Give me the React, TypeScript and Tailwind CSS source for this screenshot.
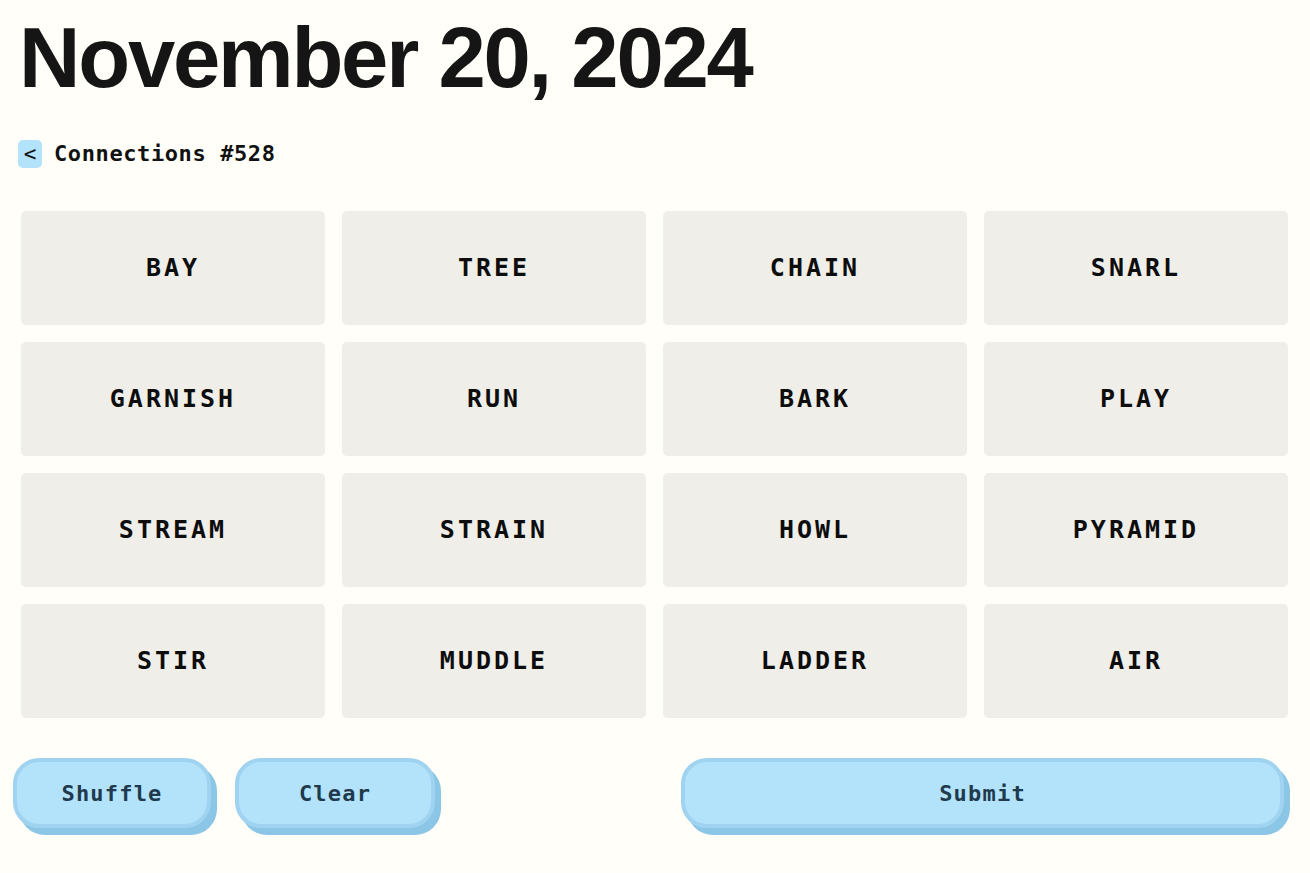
import type { ReactNode } from "react";

const WORDS = [
  "BAY", "TREE", "CHAIN", "SNARL",
  "GARNISH", "RUN", "BARK", "PLAY",
  "STREAM", "STRAIN", "HOWL", "PYRAMID",
  "STIR", "MUDDLE", "LADDER", "AIR",
];

const mono = "font-['DejaVu_Sans_Mono','Liberation_Mono',monospace]";

function PillButton({ children, className }: { children: ReactNode; className?: string }): JSX.Element {
  return (
    <button
      type="button"
      className={`flex h-[70px] shrink-0 items-center justify-center rounded-[26px] border-4 border-[#9fd3ef] bg-[#b3e2fb] text-[22px] font-bold tracking-[1.2px] text-[#1e3a4c] shadow-[6px_7px_0_#8bc6e7] ${mono} ${className ?? ""}`}
    >
      {children}
    </button>
  );
}

export default function App(): JSX.Element {
  return (
    <div className="min-h-screen w-full bg-[#fffef8] text-[#111]">
      <h1 className="pl-[19px] pt-[15px] font-['Liberation_Sans',Arial,sans-serif] text-[85px] font-bold leading-none tracking-[-0.026em] text-[#151515]">
        November 20, 2024
      </h1>

      <div className="mt-[38px] flex h-[32px] items-center gap-3 pl-[18px]">
        <button
          type="button"
          className={`flex h-7 w-6 items-center justify-center rounded-[5px] bg-[#b3e2fb] text-[21px] leading-none text-[#111] ${mono}`}
        >
          &lt;
        </button>
        <span className={`text-[22px] font-bold leading-none tracking-[0.6px] text-[#111] ${mono}`}>Connections #528</span>
      </div>

      <div className="ml-[21px] mt-[41px] grid w-[1267px] grid-cols-4 gap-[17px]">
        {WORDS.map((word) => (
          <div
            key={word}
            className={`flex h-[114px] items-center justify-center rounded-[5px] bg-[#efeee9] text-[25px] font-bold tracking-[3px] text-[#0d0d0d] ${mono}`}
          >
            {word}
          </div>
        ))}
      </div>

      <div className="mt-10 flex items-center pl-[13px]">
        <PillButton className="w-[198px]">Shuffle</PillButton>
        <PillButton className="ml-6 w-[200px]">Clear</PillButton>
        <PillButton className="ml-[246px] w-[603px]">Submit</PillButton>
      </div>
    </div>
  );
}
